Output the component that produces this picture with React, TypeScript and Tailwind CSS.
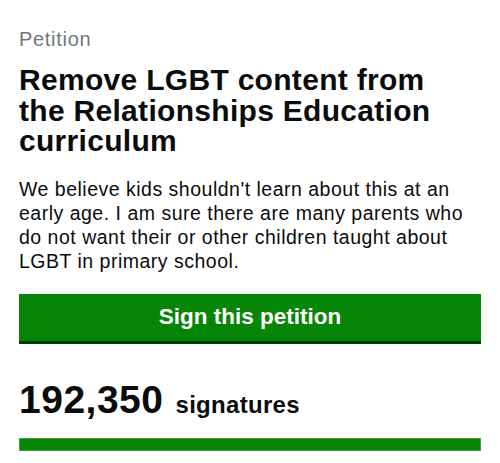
export default function App() {
  const count = 192350;

  return (
    <div className="min-h-[463px] w-full bg-white px-[19px] pt-[27px] text-[#0b0c0c] font-['Liberation_Sans',Arial,sans-serif]">
      <p className="text-[20px] leading-[24px] tracking-[0.7px] text-[#6f777b]">Petition</p>

      <h1 className="mt-[14px] max-w-[440px] text-[30px] font-bold leading-[30.5px] tracking-[0.3px]">
        Remove LGBT content from the Relationships Education curriculum
      </h1>

      <p className="mt-[20px] text-[19.5px] leading-[24.3px] tracking-[0.5px]">
        We believe kids shouldn't learn about this at an early age. I am sure there are many parents who do not want
        their or other children taught about LGBT in primary school.
      </p>

      <button className="mt-[20px] flex h-[50px] w-full items-center justify-center border-b-[3px] border-[#003b00] bg-[#078507] text-[22.5px] font-bold text-white">
        Sign this petition
      </button>

      <div className="mt-[33.5px] flex items-baseline gap-[12px] leading-[46px]">
        <span className="text-[39px] font-bold tracking-[0.5px]">{count.toLocaleString('en-GB')}</span>
        <span className="text-[24px] font-bold tracking-[0.3px]">signatures</span>
      </div>

      <div className="mt-[9.5px] h-[13px] w-full border border-[#3fa03f] bg-[#078507]" />
    </div>
  );
}
